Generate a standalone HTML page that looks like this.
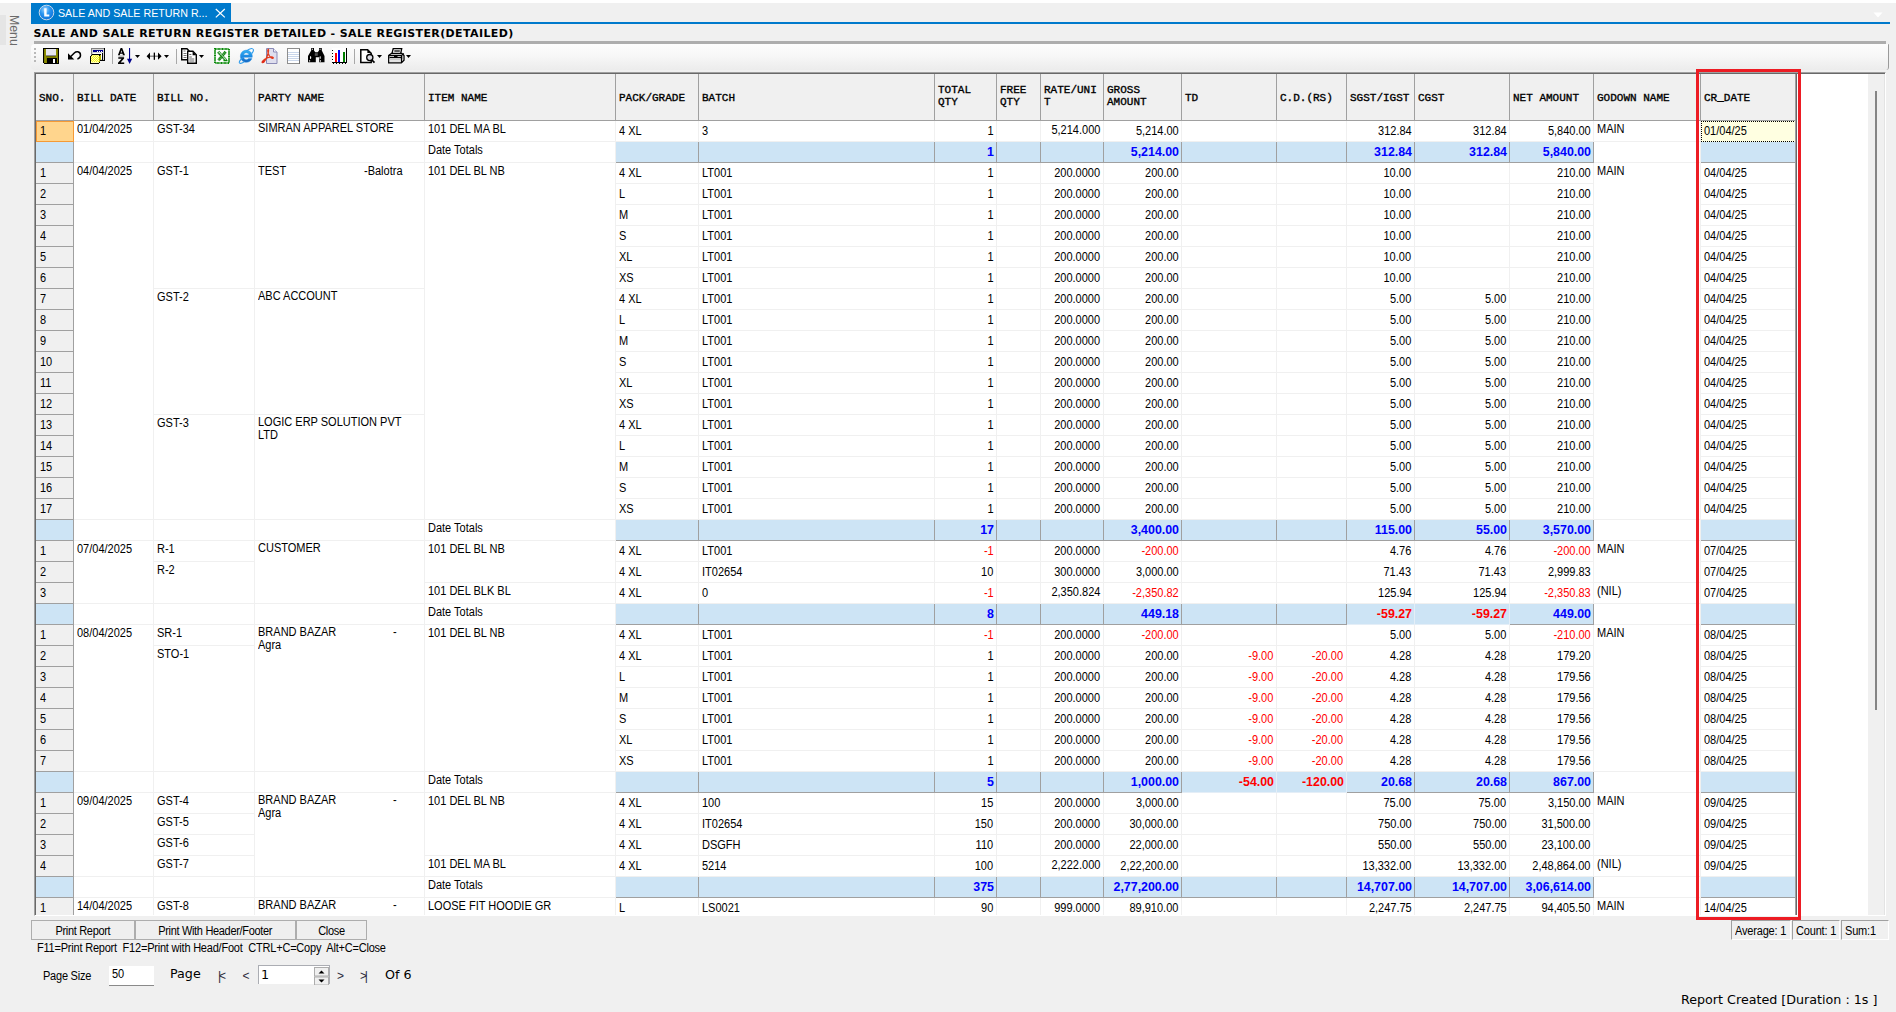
<!DOCTYPE html>
<html><head><meta charset="utf-8"><title>Sale Register</title>
<style>
html,body{margin:0;padding:0}
body{width:1896px;height:1012px;overflow:hidden;position:relative;background:#f0f0f0;font-family:"Liberation Sans",sans-serif;font-size:11px;color:#000}
.abs{position:absolute}
#topw{left:0;top:0;width:1896px;height:3px;background:#fff}
#mstrip{left:0;top:15px;width:6px;height:30px;background:#e5e5e5}
#menu{left:7px;top:15px;width:13px;height:32px;writing-mode:vertical-rl;font-size:12.3px;line-height:13px;color:#6a6a6a;white-space:nowrap}
#tab{left:31px;top:3px;width:200px;height:21px;background:#007acc;color:#fff}
#tabtxt{left:27px;top:0;line-height:20px;font-size:11.8px;white-space:nowrap;transform:scaleX(.905);transform-origin:0 50%}
#bline{left:31px;top:22px;width:1859px;height:2px;background:#007acc}
#title{left:33.5px;top:27px;line-height:14px;font-family:"DejaVu Sans",sans-serif;font-weight:bold;font-size:11px;letter-spacing:.39px;white-space:nowrap}
#gline{left:34px;top:41px;width:1852px;height:3px;background:#adadad}
#tbar{left:31px;top:44px;width:1858px;height:26px;border-radius:4px 1px 3px 4px;background:linear-gradient(#fdfdfd,#f6f6f6 50%,#ececec);box-sizing:border-box;border-right:1px solid #9a9a9a}
#tbar svg{position:absolute;top:4px}
.sep{position:absolute;top:5px;width:1px;height:15px;background:#a8a8a8}
.dd{position:absolute;top:11px;width:5px;height:3px;background:#000;clip-path:polygon(0 0,100% 0,50% 100%)}
#gridb{left:34px;top:72px;width:1852px;height:844px;box-sizing:border-box;border-top:1px solid #a0a0a0;border-left:1px solid #a0a0a0;border-right:1px solid #fff;border-bottom:1px solid #fff;background:#696969}
#grid{left:36px;top:74px;width:1849px;height:841px;background:#fff;overflow:hidden}
#sbar{left:1832px;top:0;width:16px;height:841px;background:#f0f0f0;border-right:1px solid #e3e3e3;box-sizing:content-box}
#thumb{left:1839px;top:17px;width:2px;height:619px;background:#858585}
.c{position:absolute;box-sizing:border-box;border-right:1px solid #f0f0f0;border-bottom:1px solid #f0f0f0;white-space:nowrap;overflow:hidden;padding-left:3px;line-height:21px}
.c i{font-style:normal;display:inline-block;transform:scaleX(.917);transform-origin:0 50%;font-size:12px}
.n i{transform-origin:100% 50%}
.t i{transform:none;font-size:12.4px}
.ms{display:inline-block;font-size:12px;transform:scaleX(.917);transform-origin:0 50%;white-space:pre}
.btn .ms{transform-origin:50% 50%}
.h{background:#f0f0f0;border-right:1px solid #a0a0a0;border-bottom:1px solid #a0a0a0;font-family:"Liberation Mono",monospace;font-weight:normal;-webkit-text-stroke:0.35px #000;font-size:11px;line-height:12px;padding-left:3px;display:flex;align-items:center}
.h span{display:block;position:relative;top:1px}
.h2 span{top:-1px}
.m{line-height:17px}
.p{line-height:13px;padding-top:1px}
.p br{line-height:12px}
.rh{background:#f0f0f0;border-right:1px solid #a0a0a0;border-bottom:1px solid #a0a0a0;padding-left:4px;line-height:20px}
.sel{background:#ffd58d;border:1px solid #f59a36;padding-left:3px;line-height:18px}
.tb{background:#cde4f5}
.n{text-align:right;padding-right:2.5px;padding-left:0}
.neg{color:#f00}
.up{line-height:19px}
.t{background:#cde4f5;border-right:1px solid #a0a0a0;border-bottom:1px solid #a0a0a0;font-weight:bold;font-size:12px;color:#00f;line-height:21px}
.t.n{padding-right:2px}
.tneg{color:#f00;border-right:1px solid #e4eef7;border-bottom:1px solid #e4eef7}
.cur{background:#ffffe1;border:1px dotted #000;line-height:19px;padding-left:2px}
.bal{display:inline-block;width:115.6px}
.bb{display:inline-block;width:147.2px}
#red{left:1696px;top:69px;width:105px;height:851px;box-sizing:border-box;border:3px solid #ed1c24}
.btn{position:absolute;top:920px;height:20px;box-sizing:border-box;border:1px solid #adadad;background:#efefef;text-align:center;line-height:20px;letter-spacing:-0.35px;white-space:nowrap}
#keys{left:37px;top:942px;line-height:13px;white-space:pre;letter-spacing:-0.23px}
#psz{left:43px;top:970px;line-height:13px;letter-spacing:-0.25px}
#pin{left:109px;top:966px;width:45px;height:20px;box-sizing:border-box;background:#fff;border-bottom:1px solid #8a8a8a;line-height:17px;padding-left:3px}
.vd{font-family:"DejaVu Sans",sans-serif;font-size:12.7px;white-space:nowrap;line-height:16px}
.nv{top:968px;font-size:12px;line-height:16px;color:#2a2a3a;white-space:nowrap}
#nud{left:258px;top:965px;width:72px;height:19px;box-sizing:border-box;border:1px solid #abadb3;border-bottom:none;background:#fff}
.st{position:absolute;top:920px;height:20px;box-sizing:border-box;border-left:1px solid #a0a0a0;border-top:1px solid #a0a0a0;border-right:1px solid #fff;border-bottom:1px solid #fff;line-height:20px;padding-left:3px;white-space:nowrap;letter-spacing:-0.2px}
</style></head>
<body>
<div id="topw" class="abs"></div>
<div id="mstrip" class="abs"></div>
<div id="menu" class="abs">Menu</div>
<div id="tab" class="abs">
<svg class="abs" style="left:7px;top:1px" width="17" height="17" viewBox="0 0 17 17"><defs><radialGradient id="lg" cx="40%" cy="30%" r="75%"><stop offset="0" stop-color="#9fd6ff"/><stop offset=".45" stop-color="#2a95f0"/><stop offset="1" stop-color="#0a6fd8"/></radialGradient></defs><circle cx="8.5" cy="8.5" r="7.3" fill="url(#lg)" stroke="#c9d9ea" stroke-width="1"/><path d="M6.200 4.300h2.400v6.300h2.700v1.900H6.200z" fill="#fff"/></svg>
<div id="tabtxt" class="abs">SALE AND SALE RETURN R...</div>
<svg class="abs" style="left:184px;top:5px" width="11" height="11" viewBox="0 0 11 11"><path d="M.8 1l9 8.400M9.800 1l-9 8.400" stroke="#fff" stroke-width="1.2" fill="none"/></svg>
</div>
<div id="bline" class="abs"></div>
<svg class="abs" style="left:1873px;top:12px" width="10" height="6" viewBox="0 0 10 6"><path d="M.5.5h9L5 5.5z" fill="#fff"/></svg>
<div id="title" class="abs">SALE AND SALE RETURN REGISTER DETAILED - SALE REGISTER(DETAILED)</div>
<div id="gline" class="abs"></div>
<div id="tbar" class="abs">
<svg style="left:3px;top:4px" width="2" height="14" viewBox="0 0 2 14" shape-rendering="crispEdges"><path d="M0 0h2v2H0zM0 4h2v2H0zM0 8h2v2H0zM0 12h2v2H0z" fill="#b9b9b9"/></svg>
<svg style="left:12px" width="16" height="16" viewBox="0 0 16 16" shape-rendering="crispEdges"><path d="M0 0h16v16H1L0 15z" fill="#000"/><rect x="1" y="1" width="14" height="14" fill="#7f7f00"/><rect x="2" y="1" width="1" height="14" fill="#a0a000" opacity=".5"/><rect x="13" y="1" width="1" height="14" fill="#a0a000" opacity=".5"/><rect x="3" y="1" width="10" height="7" fill="#8a8a90"/><rect x="3" y="1" width="10" height="6" fill="#e7e7ee"/><rect x="3" y="8" width="10" height="1" fill="#6b6b00"/><rect x="4" y="10" width="10" height="5" fill="#000"/><rect x="10" y="11" width="2" height="4" fill="#fff"/></svg>
<svg style="left:36px" width="16" height="16" viewBox="0 0 16 16"><path d="M1 5.200v6.300h6.300z" fill="#000"/><path d="M3.500 8.800L7.300 5Q8.800 3.500 10.800 3.800Q13.500 4.300 13.500 7.300Q13.500 10.200 10.400 10.900" fill="none" stroke="#000" stroke-width="1.500"/></svg>
<svg style="left:59px" width="16" height="16" viewBox="0 0 16 16" shape-rendering="crispEdges"><rect x="1" y="0" width="14" height="13" fill="#000"/><rect x="1" y="0" width="13" height="12" fill="#808080"/><rect x="2" y="1" width="12" height="11" fill="#d4d4d4"/><rect x="3" y="2" width="10" height="2" fill="#00008b"/><path d="M7 3h1v1H7zM9 3h1v1H9zM11 3h1v1h-1z" fill="#fff"/><rect x="3" y="5" width="10" height="6" fill="#fff"/><rect x="12" y="5" width="1" height="7" fill="#000"/><path d="M0 8L2 6h9v6l-2 4H0z" fill="#000"/><path d="M1 8L3 6.5h7L8.5 8z" fill="#ffff66"/><path d="M9 8l2-1.5v5L9 15z" fill="#b8b800"/><rect x="1" y="8" width="8" height="7" fill="#ffffb0"/><path d="M1 8h1v1H1zM3 8h1v1H3zM5 8h1v1H5zM7 8h1v1H7zM2 9h1v1H2zM4 9h1v1H4zM6 9h1v1H6zM8 9h1v1H8zM1 10h1v1H1zM3 10h1v1H3zM5 10h1v1H5zM7 10h1v1H7zM2 11h1v1H2zM4 11h1v1H4zM6 11h1v1H6zM8 11h1v1H8zM1 12h1v1H1zM3 12h1v1H3zM5 12h1v1H5zM7 12h1v1H7zM2 13h1v1H2zM4 13h1v1H4zM6 13h1v1H6zM8 13h1v1H8z" fill="#f4f420"/></svg>
<div class="sep" style="left:81px"></div>
<svg style="left:86px" width="16" height="16" viewBox="0 0 16 16"><path fill-rule="evenodd" d="M3.6 0h1.600L8 7.300H6l-.5-1.500H3.200L2.700 7.300H.9zM3.700 4.400h1.400L4.400 2.200z" fill="#000"/><rect x="1.500" y="7.600" width="5.500" height="1" fill="#a0a0a0"/><path d="M1.300 9.200h5.800v1.300L3.600 14.500h3.600V16H1v-1.300l3.600-4H1.300z" fill="#000"/><rect x="12" y="0" width="1.100" height="12" fill="#00008b"/><path d="M10 10.800h5.200L12.600 16z" fill="#00008b"/></svg>
<div class="dd" style="left:104px"></div>
<svg style="left:115px" width="17" height="16" viewBox="0 0 17 16"><rect x="3" y="7.6" width="10" height="1.2" fill="#777"/><path d="M0.6 8.2L4 4.6v7.2zM15.6 8.2L12 4.6v7.2z" fill="#000"/><rect x="7.7" y="4.6" width="1.3" height="7.2" fill="#000"/></svg>
<div class="dd" style="left:133px"></div>
<div class="sep" style="left:145px"></div>
<svg style="left:150px" width="16" height="16" viewBox="0 0 16 16"><path d="M.7.7h5.3l2 2v9H.7z" fill="#fff" stroke="#000" stroke-width="1.4"/><path d="M2.500 3h2M2.500 5.500h3M2.500 7.500h3M2.500 9.500h3" stroke="#777" stroke-width="1"/><path d="M6.7 3.2h5.2l3.4 3.6v8.5H6.7z" fill="#fff" stroke="#000" stroke-width="1.4"/><path d="M11.6 3.4v3.8h3.6z" fill="#000"/><path d="M8.300 6.500h2M8.300 9h2.500M8.300 11h5M8.300 13h5" stroke="#666" stroke-width="1"/></svg>
<div class="dd" style="left:168px"></div>
<svg style="left:183px" width="16" height="16" viewBox="0 0 16 16"><rect x="1" y="1" width="14" height="14" fill="#fff" stroke="#0a8a0a" stroke-width="2" stroke-dasharray="1 .4"/><path d="M4.200 3.800l7.800 8.600M11.600 3.800l-7.200 8.600" stroke="#0c800c" stroke-width="2.900" stroke-dasharray="1 .2"/><path d="M4.600 3.600l7.800 8.800" stroke="#e4f4e4" stroke-width=".8"/><path d="M9.500 12.600h4" stroke="#0a8a0a" stroke-width="1.300"/></svg>
<svg style="left:207px" width="17" height="16" viewBox="0 0 17 16"><defs><linearGradient id="ie" x1="0" y1="0" x2="0" y2="1"><stop offset="0" stop-color="#35b4f4"/><stop offset=".55" stop-color="#1b86e0"/><stop offset="1" stop-color="#1566c0"/></linearGradient></defs><path d="M8.3 2.2C4.9 2.2 2.4 4.9 2.4 8.3s2.6 6 6 6c2.600 0 4.700-1.500 5.500-3.700h-3.300c-.5.700-1.200 1.100-2.200 1.100-1.500 0-2.600-1-2.800-2.400h8.600c.1-.4.100-.7.100-1.100 0-3.400-2.600-6-6-6zM5.700 6.900c.3-1.300 1.300-2.100 2.600-2.100s2.400.8 2.600 2.100z" fill="url(#ie)" stroke="#1e8ae4" stroke-width=".45"/><path d="M14.800.9c-1.400-.9-4 .2-6.700 2.300M15 1c.9 1-.1 3.200-1.300 4.600M4.700 9.500C2.300 11.900.6 14 1.500 15c.8.900 3-.1 4.800-1.300" fill="none" stroke="#2e9cec" stroke-width="1.1"/></svg>
<svg style="left:230px" width="17" height="16" viewBox="0 0 17 16"><path d="M5.500.5h7l3.500 3.500v11.500H5.500z" fill="#dfdfee" stroke="#8a8ab6" stroke-width="1"/><path d="M12.500.5v3.500h3.500" fill="#f4f4fb" stroke="#8a8ab6" stroke-width="1"/><path d="M7.400 1.300c-.9.300-.7 2.300-.1 4.300.500 1.700 1.500 3.200 2.800 4.200 1.300.9 2.500.5 2.100-.3-.5-.8-3.200-.7-5.500.2-2.400 1-4.600 2.700-5.500 4.100-.5 1 .6 1.300 1.700.3 1.500-1.500 3-4.700 3.800-7.300.6-2.200 1.400-5.100.7-5.500z" fill="none" stroke="#e23a1c" stroke-width="1.300"/><circle cx="2.200" cy="13.600" r="1.200" fill="#e0281a"/></svg>
<svg style="left:256px" width="14" height="16" viewBox="0 0 14 16" shape-rendering="crispEdges"><rect x="0" y="0" width="13" height="16" fill="#8e8e8e"/><rect x="1" y="1" width="11" height="14" fill="#fff"/><rect x="12" y="1" width="1" height="15" fill="#6e6e6e"/><path d="M1 4h11v1H1zM1 6h11v1H1zM1 8h11v1H1zM1 10h11v1H1zM1 12h11v1H1z" fill="#c9d6ea"/></svg>
<svg style="left:277px" width="17" height="15" viewBox="0 0 17 15"><path d="M3.200 0h2.800v2.500l1.300 1.700h2.400l1.300-1.700V0h2.800v2.500l2.700 5.500v6.300h-5.300V9.200H7.800v5.100H0V8l3.200-5.500z" fill="#000"/><path d="M4 .8h1v.9H4zM11.600.8h1v.9h-1z" fill="#fff"/><ellipse cx="2.600" cy="9.500" rx=".6" ry="1.600" fill="#fff"/><ellipse cx="12.200" cy="9.400" rx=".6" ry="1.500" fill="#ddd"/><ellipse cx="1.700" cy="12.800" rx=".5" ry=".9" fill="#fff"/><ellipse cx="12.400" cy="12.900" rx=".5" ry=".9" fill="#fff"/><rect x="6.800" y="5.200" width="3" height="2.600" fill="#555"/></svg>
<svg style="left:301px" width="16" height="16" viewBox="0 0 16 16" shape-rendering="crispEdges"><rect x="0" y="0" width="15" height="15" fill="#fff"/><rect x="14" y="0" width="1" height="15" fill="#000"/><rect x="0" y="14" width="15" height="1" fill="#000"/><path d="M0 2h1v1H0zM0 5h1v1H0zM0 8h1v1H0zM0 11h1v1H0zM1 15h1v1H1zM4 15h1v1H4zM7 15h1v1H7zM10 15h1v1h-1zM13 15h1v1h-1z" fill="#000"/><rect x="3" y="5" width="2" height="9" fill="#f00"/><rect x="6" y="2" width="2" height="12" fill="#00f"/><rect x="11" y="4" width="2" height="10" fill="#008000"/></svg>
<div class="sep" style="left:323px"></div>
<svg style="left:329px;top:5px" width="16" height="15" viewBox="0 0 16 15"><path d="M.8.800h6.800l3.600 3.600v9H.8z" fill="#fff" stroke="#000" stroke-width="1.500"/><path d="M7.400.8v3.200h3.400" fill="#000"/><circle cx="9.800" cy="8.600" r="3.100" fill="#dcdce4" stroke="#000" stroke-width="1.300"/><path d="M11.900 11l2.600 2.700" stroke="#000" stroke-width="1.700"/></svg>
<div class="dd" style="left:346px"></div>
<svg style="left:357px" width="17" height="16" viewBox="0 0 17 16"><path d="M4 5.500L5.200.7h8.500l-1 4.800" fill="#fff" stroke="#000" stroke-width="1.300"/><path d="M6.300 3h5.500" stroke="#000" stroke-width="1.300"/><path d="M.7 7.500L3.500 5.300h10.300L16 7.500v4.800l-2.700 2.500H.7z" fill="#fff" stroke="#000" stroke-width="1.300"/><path d="M.7 7.500h12.800v7.300M13.500 7.500l2.300-2" fill="none" stroke="#000" stroke-width="1.300"/><path d="M1.500 9.600h11.500" stroke="#000" stroke-width="1.200"/><path d="M1.500 11.500h11.500M1.500 13h11.500" stroke="#c8c8c8" stroke-width="1"/><path d="M6 8.400h3.500" stroke="#000" stroke-width="1.400"/><path d="M14.700 8v3.500" stroke="#999" stroke-width="1"/></svg>
<div class="dd" style="left:375px"></div>

</div>
<div id="gridb" class="abs"></div>
<div id="grid" class="abs">
<div class="c h" style="left:0px;top:0px;width:38px;height:47px"><span>SNO.</span></div>
<div class="c h" style="left:38px;top:0px;width:80px;height:47px"><span>BILL DATE</span></div>
<div class="c h" style="left:118px;top:0px;width:101px;height:47px"><span>BILL NO.</span></div>
<div class="c h" style="left:219px;top:0px;width:170px;height:47px"><span>PARTY NAME</span></div>
<div class="c h" style="left:389px;top:0px;width:191px;height:47px"><span>ITEM NAME</span></div>
<div class="c h" style="left:580px;top:0px;width:83px;height:47px"><span>PACK/GRADE</span></div>
<div class="c h" style="left:663px;top:0px;width:236px;height:47px"><span>BATCH</span></div>
<div class="c h h2" style="left:899px;top:0px;width:62px;height:47px"><span>TOTAL<br>QTY</span></div>
<div class="c h h2" style="left:961px;top:0px;width:44px;height:47px"><span>FREE<br>QTY</span></div>
<div class="c h h2" style="left:1005px;top:0px;width:63px;height:47px"><span>RATE/UNI<br>T</span></div>
<div class="c h h2" style="left:1068px;top:0px;width:78px;height:47px"><span>GROSS<br>AMOUNT</span></div>
<div class="c h" style="left:1146px;top:0px;width:95px;height:47px"><span>TD</span></div>
<div class="c h" style="left:1241px;top:0px;width:70px;height:47px"><span>C.D.(RS)</span></div>
<div class="c h" style="left:1311px;top:0px;width:68px;height:47px"><span>SGST/IGST</span></div>
<div class="c h" style="left:1379px;top:0px;width:95px;height:47px"><span>CGST</span></div>
<div class="c h" style="left:1474px;top:0px;width:84px;height:47px"><span>NET AMOUNT</span></div>
<div class="c h" style="left:1558px;top:0px;width:107px;height:47px"><span>GODOWN NAME</span></div>
<div class="c h" style="left:1665px;top:0px;width:95px;height:47px"><span>CR_DATE</span></div>
<div class="c m" style="left:38px;top:47px;width:80px;height:21px"><i>01/04/2025</i></div>
<div class="c m" style="left:118px;top:47px;width:101px;height:21px"><i>GST-34</i></div>
<div class="c m p" style="left:219px;top:47px;width:170px;height:21px"><i>SIMRAN APPAREL STORE</i></div>
<div class="c m" style="left:389px;top:47px;width:191px;height:21px"><i>101 DEL MA BL</i></div>
<div class="c m" style="left:1558px;top:47px;width:107px;height:21px"><i>MAIN</i></div>
<div class="c rh sel" style="left:0px;top:47px;width:38px;height:21px"><i>1</i></div>
<div class="c d" style="left:580px;top:47px;width:83px;height:21px"><i>4 XL</i></div>
<div class="c d" style="left:663px;top:47px;width:236px;height:21px"><i>3</i></div>
<div class="c d n" style="left:899px;top:47px;width:62px;height:21px"><i>1</i></div>
<div class="c d n" style="left:961px;top:47px;width:44px;height:21px"></div>
<div class="c d n up" style="left:1005px;top:47px;width:63px;height:21px"><i>5,214.000</i></div>
<div class="c d n" style="left:1068px;top:47px;width:78px;height:21px"><i>5,214.00</i></div>
<div class="c d n" style="left:1146px;top:47px;width:95px;height:21px"></div>
<div class="c d n" style="left:1241px;top:47px;width:70px;height:21px"></div>
<div class="c d n" style="left:1311px;top:47px;width:68px;height:21px"><i>312.84</i></div>
<div class="c d n" style="left:1379px;top:47px;width:95px;height:21px"><i>312.84</i></div>
<div class="c d n" style="left:1474px;top:47px;width:84px;height:21px"><i>5,840.00</i></div>
<div class="c d cur" style="left:1665px;top:47px;width:95px;height:21px"><i>01/04/25</i></div>
<div class="c rh tb" style="left:0px;top:68px;width:38px;height:21px"></div>
<div class="c m" style="left:38px;top:68px;width:80px;height:21px"></div>
<div class="c m" style="left:118px;top:68px;width:101px;height:21px"></div>
<div class="c m" style="left:219px;top:68px;width:170px;height:21px"></div>
<div class="c m" style="left:389px;top:68px;width:191px;height:21px"><i>Date Totals</i></div>
<div class="c t" style="left:580px;top:68px;width:83px;height:21px"></div>
<div class="c t" style="left:663px;top:68px;width:236px;height:21px"></div>
<div class="c t n" style="left:899px;top:68px;width:62px;height:21px"><i>1</i></div>
<div class="c t n" style="left:961px;top:68px;width:44px;height:21px"></div>
<div class="c t n" style="left:1005px;top:68px;width:63px;height:21px"></div>
<div class="c t n" style="left:1068px;top:68px;width:78px;height:21px"><i>5,214.00</i></div>
<div class="c t n" style="left:1146px;top:68px;width:95px;height:21px"></div>
<div class="c t n" style="left:1241px;top:68px;width:70px;height:21px"></div>
<div class="c t n" style="left:1311px;top:68px;width:68px;height:21px"><i>312.84</i></div>
<div class="c t n" style="left:1379px;top:68px;width:95px;height:21px"><i>312.84</i></div>
<div class="c t n" style="left:1474px;top:68px;width:84px;height:21px"><i>5,840.00</i></div>
<div class="c m" style="left:1558px;top:68px;width:107px;height:21px"></div>
<div class="c t" style="left:1665px;top:68px;width:95px;height:21px"></div>
<div class="c m" style="left:38px;top:89px;width:80px;height:357px"><i>04/04/2025</i></div>
<div class="c m" style="left:118px;top:89px;width:101px;height:126px"><i>GST-1</i></div>
<div class="c m" style="left:118px;top:215px;width:101px;height:126px"><i>GST-2</i></div>
<div class="c m" style="left:118px;top:341px;width:101px;height:105px"><i>GST-3</i></div>
<div class="c m p" style="left:219px;top:89px;width:170px;height:126px"><i><span class="bal" style="position:relative;top:1px">TEST</span><span style="position:relative;top:1px">-Balotra</span></i></div>
<div class="c m p" style="left:219px;top:215px;width:170px;height:126px"><i>ABC ACCOUNT</i></div>
<div class="c m p" style="left:219px;top:341px;width:170px;height:105px"><i>LOGIC ERP SOLUTION PVT<br>LTD</i></div>
<div class="c m" style="left:389px;top:89px;width:191px;height:357px"><i>101 DEL BL NB</i></div>
<div class="c m" style="left:1558px;top:89px;width:107px;height:357px"><i>MAIN</i></div>
<div class="c rh" style="left:0px;top:89px;width:38px;height:21px"><i>1</i></div>
<div class="c d" style="left:580px;top:89px;width:83px;height:21px"><i>4 XL</i></div>
<div class="c d" style="left:663px;top:89px;width:236px;height:21px"><i>LT001</i></div>
<div class="c d n" style="left:899px;top:89px;width:62px;height:21px"><i>1</i></div>
<div class="c d n" style="left:961px;top:89px;width:44px;height:21px"></div>
<div class="c d n" style="left:1005px;top:89px;width:63px;height:21px"><i>200.0000</i></div>
<div class="c d n" style="left:1068px;top:89px;width:78px;height:21px"><i>200.00</i></div>
<div class="c d n" style="left:1146px;top:89px;width:95px;height:21px"></div>
<div class="c d n" style="left:1241px;top:89px;width:70px;height:21px"></div>
<div class="c d n" style="left:1311px;top:89px;width:68px;height:21px"><i>10.00</i></div>
<div class="c d n" style="left:1379px;top:89px;width:95px;height:21px"></div>
<div class="c d n" style="left:1474px;top:89px;width:84px;height:21px"><i>210.00</i></div>
<div class="c d" style="left:1665px;top:89px;width:95px;height:21px"><i>04/04/25</i></div>
<div class="c rh" style="left:0px;top:110px;width:38px;height:21px"><i>2</i></div>
<div class="c d" style="left:580px;top:110px;width:83px;height:21px"><i>L</i></div>
<div class="c d" style="left:663px;top:110px;width:236px;height:21px"><i>LT001</i></div>
<div class="c d n" style="left:899px;top:110px;width:62px;height:21px"><i>1</i></div>
<div class="c d n" style="left:961px;top:110px;width:44px;height:21px"></div>
<div class="c d n" style="left:1005px;top:110px;width:63px;height:21px"><i>200.0000</i></div>
<div class="c d n" style="left:1068px;top:110px;width:78px;height:21px"><i>200.00</i></div>
<div class="c d n" style="left:1146px;top:110px;width:95px;height:21px"></div>
<div class="c d n" style="left:1241px;top:110px;width:70px;height:21px"></div>
<div class="c d n" style="left:1311px;top:110px;width:68px;height:21px"><i>10.00</i></div>
<div class="c d n" style="left:1379px;top:110px;width:95px;height:21px"></div>
<div class="c d n" style="left:1474px;top:110px;width:84px;height:21px"><i>210.00</i></div>
<div class="c d" style="left:1665px;top:110px;width:95px;height:21px"><i>04/04/25</i></div>
<div class="c rh" style="left:0px;top:131px;width:38px;height:21px"><i>3</i></div>
<div class="c d" style="left:580px;top:131px;width:83px;height:21px"><i>M</i></div>
<div class="c d" style="left:663px;top:131px;width:236px;height:21px"><i>LT001</i></div>
<div class="c d n" style="left:899px;top:131px;width:62px;height:21px"><i>1</i></div>
<div class="c d n" style="left:961px;top:131px;width:44px;height:21px"></div>
<div class="c d n" style="left:1005px;top:131px;width:63px;height:21px"><i>200.0000</i></div>
<div class="c d n" style="left:1068px;top:131px;width:78px;height:21px"><i>200.00</i></div>
<div class="c d n" style="left:1146px;top:131px;width:95px;height:21px"></div>
<div class="c d n" style="left:1241px;top:131px;width:70px;height:21px"></div>
<div class="c d n" style="left:1311px;top:131px;width:68px;height:21px"><i>10.00</i></div>
<div class="c d n" style="left:1379px;top:131px;width:95px;height:21px"></div>
<div class="c d n" style="left:1474px;top:131px;width:84px;height:21px"><i>210.00</i></div>
<div class="c d" style="left:1665px;top:131px;width:95px;height:21px"><i>04/04/25</i></div>
<div class="c rh" style="left:0px;top:152px;width:38px;height:21px"><i>4</i></div>
<div class="c d" style="left:580px;top:152px;width:83px;height:21px"><i>S</i></div>
<div class="c d" style="left:663px;top:152px;width:236px;height:21px"><i>LT001</i></div>
<div class="c d n" style="left:899px;top:152px;width:62px;height:21px"><i>1</i></div>
<div class="c d n" style="left:961px;top:152px;width:44px;height:21px"></div>
<div class="c d n" style="left:1005px;top:152px;width:63px;height:21px"><i>200.0000</i></div>
<div class="c d n" style="left:1068px;top:152px;width:78px;height:21px"><i>200.00</i></div>
<div class="c d n" style="left:1146px;top:152px;width:95px;height:21px"></div>
<div class="c d n" style="left:1241px;top:152px;width:70px;height:21px"></div>
<div class="c d n" style="left:1311px;top:152px;width:68px;height:21px"><i>10.00</i></div>
<div class="c d n" style="left:1379px;top:152px;width:95px;height:21px"></div>
<div class="c d n" style="left:1474px;top:152px;width:84px;height:21px"><i>210.00</i></div>
<div class="c d" style="left:1665px;top:152px;width:95px;height:21px"><i>04/04/25</i></div>
<div class="c rh" style="left:0px;top:173px;width:38px;height:21px"><i>5</i></div>
<div class="c d" style="left:580px;top:173px;width:83px;height:21px"><i>XL</i></div>
<div class="c d" style="left:663px;top:173px;width:236px;height:21px"><i>LT001</i></div>
<div class="c d n" style="left:899px;top:173px;width:62px;height:21px"><i>1</i></div>
<div class="c d n" style="left:961px;top:173px;width:44px;height:21px"></div>
<div class="c d n" style="left:1005px;top:173px;width:63px;height:21px"><i>200.0000</i></div>
<div class="c d n" style="left:1068px;top:173px;width:78px;height:21px"><i>200.00</i></div>
<div class="c d n" style="left:1146px;top:173px;width:95px;height:21px"></div>
<div class="c d n" style="left:1241px;top:173px;width:70px;height:21px"></div>
<div class="c d n" style="left:1311px;top:173px;width:68px;height:21px"><i>10.00</i></div>
<div class="c d n" style="left:1379px;top:173px;width:95px;height:21px"></div>
<div class="c d n" style="left:1474px;top:173px;width:84px;height:21px"><i>210.00</i></div>
<div class="c d" style="left:1665px;top:173px;width:95px;height:21px"><i>04/04/25</i></div>
<div class="c rh" style="left:0px;top:194px;width:38px;height:21px"><i>6</i></div>
<div class="c d" style="left:580px;top:194px;width:83px;height:21px"><i>XS</i></div>
<div class="c d" style="left:663px;top:194px;width:236px;height:21px"><i>LT001</i></div>
<div class="c d n" style="left:899px;top:194px;width:62px;height:21px"><i>1</i></div>
<div class="c d n" style="left:961px;top:194px;width:44px;height:21px"></div>
<div class="c d n" style="left:1005px;top:194px;width:63px;height:21px"><i>200.0000</i></div>
<div class="c d n" style="left:1068px;top:194px;width:78px;height:21px"><i>200.00</i></div>
<div class="c d n" style="left:1146px;top:194px;width:95px;height:21px"></div>
<div class="c d n" style="left:1241px;top:194px;width:70px;height:21px"></div>
<div class="c d n" style="left:1311px;top:194px;width:68px;height:21px"><i>10.00</i></div>
<div class="c d n" style="left:1379px;top:194px;width:95px;height:21px"></div>
<div class="c d n" style="left:1474px;top:194px;width:84px;height:21px"><i>210.00</i></div>
<div class="c d" style="left:1665px;top:194px;width:95px;height:21px"><i>04/04/25</i></div>
<div class="c rh" style="left:0px;top:215px;width:38px;height:21px"><i>7</i></div>
<div class="c d" style="left:580px;top:215px;width:83px;height:21px"><i>4 XL</i></div>
<div class="c d" style="left:663px;top:215px;width:236px;height:21px"><i>LT001</i></div>
<div class="c d n" style="left:899px;top:215px;width:62px;height:21px"><i>1</i></div>
<div class="c d n" style="left:961px;top:215px;width:44px;height:21px"></div>
<div class="c d n" style="left:1005px;top:215px;width:63px;height:21px"><i>200.0000</i></div>
<div class="c d n" style="left:1068px;top:215px;width:78px;height:21px"><i>200.00</i></div>
<div class="c d n" style="left:1146px;top:215px;width:95px;height:21px"></div>
<div class="c d n" style="left:1241px;top:215px;width:70px;height:21px"></div>
<div class="c d n" style="left:1311px;top:215px;width:68px;height:21px"><i>5.00</i></div>
<div class="c d n" style="left:1379px;top:215px;width:95px;height:21px"><i>5.00</i></div>
<div class="c d n" style="left:1474px;top:215px;width:84px;height:21px"><i>210.00</i></div>
<div class="c d" style="left:1665px;top:215px;width:95px;height:21px"><i>04/04/25</i></div>
<div class="c rh" style="left:0px;top:236px;width:38px;height:21px"><i>8</i></div>
<div class="c d" style="left:580px;top:236px;width:83px;height:21px"><i>L</i></div>
<div class="c d" style="left:663px;top:236px;width:236px;height:21px"><i>LT001</i></div>
<div class="c d n" style="left:899px;top:236px;width:62px;height:21px"><i>1</i></div>
<div class="c d n" style="left:961px;top:236px;width:44px;height:21px"></div>
<div class="c d n" style="left:1005px;top:236px;width:63px;height:21px"><i>200.0000</i></div>
<div class="c d n" style="left:1068px;top:236px;width:78px;height:21px"><i>200.00</i></div>
<div class="c d n" style="left:1146px;top:236px;width:95px;height:21px"></div>
<div class="c d n" style="left:1241px;top:236px;width:70px;height:21px"></div>
<div class="c d n" style="left:1311px;top:236px;width:68px;height:21px"><i>5.00</i></div>
<div class="c d n" style="left:1379px;top:236px;width:95px;height:21px"><i>5.00</i></div>
<div class="c d n" style="left:1474px;top:236px;width:84px;height:21px"><i>210.00</i></div>
<div class="c d" style="left:1665px;top:236px;width:95px;height:21px"><i>04/04/25</i></div>
<div class="c rh" style="left:0px;top:257px;width:38px;height:21px"><i>9</i></div>
<div class="c d" style="left:580px;top:257px;width:83px;height:21px"><i>M</i></div>
<div class="c d" style="left:663px;top:257px;width:236px;height:21px"><i>LT001</i></div>
<div class="c d n" style="left:899px;top:257px;width:62px;height:21px"><i>1</i></div>
<div class="c d n" style="left:961px;top:257px;width:44px;height:21px"></div>
<div class="c d n" style="left:1005px;top:257px;width:63px;height:21px"><i>200.0000</i></div>
<div class="c d n" style="left:1068px;top:257px;width:78px;height:21px"><i>200.00</i></div>
<div class="c d n" style="left:1146px;top:257px;width:95px;height:21px"></div>
<div class="c d n" style="left:1241px;top:257px;width:70px;height:21px"></div>
<div class="c d n" style="left:1311px;top:257px;width:68px;height:21px"><i>5.00</i></div>
<div class="c d n" style="left:1379px;top:257px;width:95px;height:21px"><i>5.00</i></div>
<div class="c d n" style="left:1474px;top:257px;width:84px;height:21px"><i>210.00</i></div>
<div class="c d" style="left:1665px;top:257px;width:95px;height:21px"><i>04/04/25</i></div>
<div class="c rh" style="left:0px;top:278px;width:38px;height:21px"><i>10</i></div>
<div class="c d" style="left:580px;top:278px;width:83px;height:21px"><i>S</i></div>
<div class="c d" style="left:663px;top:278px;width:236px;height:21px"><i>LT001</i></div>
<div class="c d n" style="left:899px;top:278px;width:62px;height:21px"><i>1</i></div>
<div class="c d n" style="left:961px;top:278px;width:44px;height:21px"></div>
<div class="c d n" style="left:1005px;top:278px;width:63px;height:21px"><i>200.0000</i></div>
<div class="c d n" style="left:1068px;top:278px;width:78px;height:21px"><i>200.00</i></div>
<div class="c d n" style="left:1146px;top:278px;width:95px;height:21px"></div>
<div class="c d n" style="left:1241px;top:278px;width:70px;height:21px"></div>
<div class="c d n" style="left:1311px;top:278px;width:68px;height:21px"><i>5.00</i></div>
<div class="c d n" style="left:1379px;top:278px;width:95px;height:21px"><i>5.00</i></div>
<div class="c d n" style="left:1474px;top:278px;width:84px;height:21px"><i>210.00</i></div>
<div class="c d" style="left:1665px;top:278px;width:95px;height:21px"><i>04/04/25</i></div>
<div class="c rh" style="left:0px;top:299px;width:38px;height:21px"><i>11</i></div>
<div class="c d" style="left:580px;top:299px;width:83px;height:21px"><i>XL</i></div>
<div class="c d" style="left:663px;top:299px;width:236px;height:21px"><i>LT001</i></div>
<div class="c d n" style="left:899px;top:299px;width:62px;height:21px"><i>1</i></div>
<div class="c d n" style="left:961px;top:299px;width:44px;height:21px"></div>
<div class="c d n" style="left:1005px;top:299px;width:63px;height:21px"><i>200.0000</i></div>
<div class="c d n" style="left:1068px;top:299px;width:78px;height:21px"><i>200.00</i></div>
<div class="c d n" style="left:1146px;top:299px;width:95px;height:21px"></div>
<div class="c d n" style="left:1241px;top:299px;width:70px;height:21px"></div>
<div class="c d n" style="left:1311px;top:299px;width:68px;height:21px"><i>5.00</i></div>
<div class="c d n" style="left:1379px;top:299px;width:95px;height:21px"><i>5.00</i></div>
<div class="c d n" style="left:1474px;top:299px;width:84px;height:21px"><i>210.00</i></div>
<div class="c d" style="left:1665px;top:299px;width:95px;height:21px"><i>04/04/25</i></div>
<div class="c rh" style="left:0px;top:320px;width:38px;height:21px"><i>12</i></div>
<div class="c d" style="left:580px;top:320px;width:83px;height:21px"><i>XS</i></div>
<div class="c d" style="left:663px;top:320px;width:236px;height:21px"><i>LT001</i></div>
<div class="c d n" style="left:899px;top:320px;width:62px;height:21px"><i>1</i></div>
<div class="c d n" style="left:961px;top:320px;width:44px;height:21px"></div>
<div class="c d n" style="left:1005px;top:320px;width:63px;height:21px"><i>200.0000</i></div>
<div class="c d n" style="left:1068px;top:320px;width:78px;height:21px"><i>200.00</i></div>
<div class="c d n" style="left:1146px;top:320px;width:95px;height:21px"></div>
<div class="c d n" style="left:1241px;top:320px;width:70px;height:21px"></div>
<div class="c d n" style="left:1311px;top:320px;width:68px;height:21px"><i>5.00</i></div>
<div class="c d n" style="left:1379px;top:320px;width:95px;height:21px"><i>5.00</i></div>
<div class="c d n" style="left:1474px;top:320px;width:84px;height:21px"><i>210.00</i></div>
<div class="c d" style="left:1665px;top:320px;width:95px;height:21px"><i>04/04/25</i></div>
<div class="c rh" style="left:0px;top:341px;width:38px;height:21px"><i>13</i></div>
<div class="c d" style="left:580px;top:341px;width:83px;height:21px"><i>4 XL</i></div>
<div class="c d" style="left:663px;top:341px;width:236px;height:21px"><i>LT001</i></div>
<div class="c d n" style="left:899px;top:341px;width:62px;height:21px"><i>1</i></div>
<div class="c d n" style="left:961px;top:341px;width:44px;height:21px"></div>
<div class="c d n" style="left:1005px;top:341px;width:63px;height:21px"><i>200.0000</i></div>
<div class="c d n" style="left:1068px;top:341px;width:78px;height:21px"><i>200.00</i></div>
<div class="c d n" style="left:1146px;top:341px;width:95px;height:21px"></div>
<div class="c d n" style="left:1241px;top:341px;width:70px;height:21px"></div>
<div class="c d n" style="left:1311px;top:341px;width:68px;height:21px"><i>5.00</i></div>
<div class="c d n" style="left:1379px;top:341px;width:95px;height:21px"><i>5.00</i></div>
<div class="c d n" style="left:1474px;top:341px;width:84px;height:21px"><i>210.00</i></div>
<div class="c d" style="left:1665px;top:341px;width:95px;height:21px"><i>04/04/25</i></div>
<div class="c rh" style="left:0px;top:362px;width:38px;height:21px"><i>14</i></div>
<div class="c d" style="left:580px;top:362px;width:83px;height:21px"><i>L</i></div>
<div class="c d" style="left:663px;top:362px;width:236px;height:21px"><i>LT001</i></div>
<div class="c d n" style="left:899px;top:362px;width:62px;height:21px"><i>1</i></div>
<div class="c d n" style="left:961px;top:362px;width:44px;height:21px"></div>
<div class="c d n" style="left:1005px;top:362px;width:63px;height:21px"><i>200.0000</i></div>
<div class="c d n" style="left:1068px;top:362px;width:78px;height:21px"><i>200.00</i></div>
<div class="c d n" style="left:1146px;top:362px;width:95px;height:21px"></div>
<div class="c d n" style="left:1241px;top:362px;width:70px;height:21px"></div>
<div class="c d n" style="left:1311px;top:362px;width:68px;height:21px"><i>5.00</i></div>
<div class="c d n" style="left:1379px;top:362px;width:95px;height:21px"><i>5.00</i></div>
<div class="c d n" style="left:1474px;top:362px;width:84px;height:21px"><i>210.00</i></div>
<div class="c d" style="left:1665px;top:362px;width:95px;height:21px"><i>04/04/25</i></div>
<div class="c rh" style="left:0px;top:383px;width:38px;height:21px"><i>15</i></div>
<div class="c d" style="left:580px;top:383px;width:83px;height:21px"><i>M</i></div>
<div class="c d" style="left:663px;top:383px;width:236px;height:21px"><i>LT001</i></div>
<div class="c d n" style="left:899px;top:383px;width:62px;height:21px"><i>1</i></div>
<div class="c d n" style="left:961px;top:383px;width:44px;height:21px"></div>
<div class="c d n" style="left:1005px;top:383px;width:63px;height:21px"><i>200.0000</i></div>
<div class="c d n" style="left:1068px;top:383px;width:78px;height:21px"><i>200.00</i></div>
<div class="c d n" style="left:1146px;top:383px;width:95px;height:21px"></div>
<div class="c d n" style="left:1241px;top:383px;width:70px;height:21px"></div>
<div class="c d n" style="left:1311px;top:383px;width:68px;height:21px"><i>5.00</i></div>
<div class="c d n" style="left:1379px;top:383px;width:95px;height:21px"><i>5.00</i></div>
<div class="c d n" style="left:1474px;top:383px;width:84px;height:21px"><i>210.00</i></div>
<div class="c d" style="left:1665px;top:383px;width:95px;height:21px"><i>04/04/25</i></div>
<div class="c rh" style="left:0px;top:404px;width:38px;height:21px"><i>16</i></div>
<div class="c d" style="left:580px;top:404px;width:83px;height:21px"><i>S</i></div>
<div class="c d" style="left:663px;top:404px;width:236px;height:21px"><i>LT001</i></div>
<div class="c d n" style="left:899px;top:404px;width:62px;height:21px"><i>1</i></div>
<div class="c d n" style="left:961px;top:404px;width:44px;height:21px"></div>
<div class="c d n" style="left:1005px;top:404px;width:63px;height:21px"><i>200.0000</i></div>
<div class="c d n" style="left:1068px;top:404px;width:78px;height:21px"><i>200.00</i></div>
<div class="c d n" style="left:1146px;top:404px;width:95px;height:21px"></div>
<div class="c d n" style="left:1241px;top:404px;width:70px;height:21px"></div>
<div class="c d n" style="left:1311px;top:404px;width:68px;height:21px"><i>5.00</i></div>
<div class="c d n" style="left:1379px;top:404px;width:95px;height:21px"><i>5.00</i></div>
<div class="c d n" style="left:1474px;top:404px;width:84px;height:21px"><i>210.00</i></div>
<div class="c d" style="left:1665px;top:404px;width:95px;height:21px"><i>04/04/25</i></div>
<div class="c rh" style="left:0px;top:425px;width:38px;height:21px"><i>17</i></div>
<div class="c d" style="left:580px;top:425px;width:83px;height:21px"><i>XS</i></div>
<div class="c d" style="left:663px;top:425px;width:236px;height:21px"><i>LT001</i></div>
<div class="c d n" style="left:899px;top:425px;width:62px;height:21px"><i>1</i></div>
<div class="c d n" style="left:961px;top:425px;width:44px;height:21px"></div>
<div class="c d n" style="left:1005px;top:425px;width:63px;height:21px"><i>200.0000</i></div>
<div class="c d n" style="left:1068px;top:425px;width:78px;height:21px"><i>200.00</i></div>
<div class="c d n" style="left:1146px;top:425px;width:95px;height:21px"></div>
<div class="c d n" style="left:1241px;top:425px;width:70px;height:21px"></div>
<div class="c d n" style="left:1311px;top:425px;width:68px;height:21px"><i>5.00</i></div>
<div class="c d n" style="left:1379px;top:425px;width:95px;height:21px"><i>5.00</i></div>
<div class="c d n" style="left:1474px;top:425px;width:84px;height:21px"><i>210.00</i></div>
<div class="c d" style="left:1665px;top:425px;width:95px;height:21px"><i>04/04/25</i></div>
<div class="c rh tb" style="left:0px;top:446px;width:38px;height:21px"></div>
<div class="c m" style="left:38px;top:446px;width:80px;height:21px"></div>
<div class="c m" style="left:118px;top:446px;width:101px;height:21px"></div>
<div class="c m" style="left:219px;top:446px;width:170px;height:21px"></div>
<div class="c m" style="left:389px;top:446px;width:191px;height:21px"><i>Date Totals</i></div>
<div class="c t" style="left:580px;top:446px;width:83px;height:21px"></div>
<div class="c t" style="left:663px;top:446px;width:236px;height:21px"></div>
<div class="c t n" style="left:899px;top:446px;width:62px;height:21px"><i>17</i></div>
<div class="c t n" style="left:961px;top:446px;width:44px;height:21px"></div>
<div class="c t n" style="left:1005px;top:446px;width:63px;height:21px"></div>
<div class="c t n" style="left:1068px;top:446px;width:78px;height:21px"><i>3,400.00</i></div>
<div class="c t n" style="left:1146px;top:446px;width:95px;height:21px"></div>
<div class="c t n" style="left:1241px;top:446px;width:70px;height:21px"></div>
<div class="c t n" style="left:1311px;top:446px;width:68px;height:21px"><i>115.00</i></div>
<div class="c t n" style="left:1379px;top:446px;width:95px;height:21px"><i>55.00</i></div>
<div class="c t n" style="left:1474px;top:446px;width:84px;height:21px"><i>3,570.00</i></div>
<div class="c m" style="left:1558px;top:446px;width:107px;height:21px"></div>
<div class="c t" style="left:1665px;top:446px;width:95px;height:21px"></div>
<div class="c m" style="left:38px;top:467px;width:80px;height:63px"><i>07/04/2025</i></div>
<div class="c m" style="left:118px;top:467px;width:101px;height:21px"><i>R-1</i></div>
<div class="c m" style="left:118px;top:488px;width:101px;height:42px"><i>R-2</i></div>
<div class="c m p" style="left:219px;top:467px;width:170px;height:63px"><i>CUSTOMER</i></div>
<div class="c m" style="left:389px;top:467px;width:191px;height:42px"><i>101 DEL BL NB</i></div>
<div class="c m" style="left:389px;top:509px;width:191px;height:21px"><i>101 DEL BLK BL</i></div>
<div class="c m" style="left:1558px;top:467px;width:107px;height:42px"><i>MAIN</i></div>
<div class="c m" style="left:1558px;top:509px;width:107px;height:21px"><i>(NIL)</i></div>
<div class="c rh" style="left:0px;top:467px;width:38px;height:21px"><i>1</i></div>
<div class="c d" style="left:580px;top:467px;width:83px;height:21px"><i>4 XL</i></div>
<div class="c d" style="left:663px;top:467px;width:236px;height:21px"><i>LT001</i></div>
<div class="c d n neg" style="left:899px;top:467px;width:62px;height:21px"><i>-1</i></div>
<div class="c d n" style="left:961px;top:467px;width:44px;height:21px"></div>
<div class="c d n" style="left:1005px;top:467px;width:63px;height:21px"><i>200.0000</i></div>
<div class="c d n neg" style="left:1068px;top:467px;width:78px;height:21px"><i>-200.00</i></div>
<div class="c d n" style="left:1146px;top:467px;width:95px;height:21px"></div>
<div class="c d n" style="left:1241px;top:467px;width:70px;height:21px"></div>
<div class="c d n" style="left:1311px;top:467px;width:68px;height:21px"><i>4.76</i></div>
<div class="c d n" style="left:1379px;top:467px;width:95px;height:21px"><i>4.76</i></div>
<div class="c d n neg" style="left:1474px;top:467px;width:84px;height:21px"><i>-200.00</i></div>
<div class="c d" style="left:1665px;top:467px;width:95px;height:21px"><i>07/04/25</i></div>
<div class="c rh" style="left:0px;top:488px;width:38px;height:21px"><i>2</i></div>
<div class="c d" style="left:580px;top:488px;width:83px;height:21px"><i>4 XL</i></div>
<div class="c d" style="left:663px;top:488px;width:236px;height:21px"><i>IT02654</i></div>
<div class="c d n" style="left:899px;top:488px;width:62px;height:21px"><i>10</i></div>
<div class="c d n" style="left:961px;top:488px;width:44px;height:21px"></div>
<div class="c d n" style="left:1005px;top:488px;width:63px;height:21px"><i>300.0000</i></div>
<div class="c d n" style="left:1068px;top:488px;width:78px;height:21px"><i>3,000.00</i></div>
<div class="c d n" style="left:1146px;top:488px;width:95px;height:21px"></div>
<div class="c d n" style="left:1241px;top:488px;width:70px;height:21px"></div>
<div class="c d n" style="left:1311px;top:488px;width:68px;height:21px"><i>71.43</i></div>
<div class="c d n" style="left:1379px;top:488px;width:95px;height:21px"><i>71.43</i></div>
<div class="c d n" style="left:1474px;top:488px;width:84px;height:21px"><i>2,999.83</i></div>
<div class="c d" style="left:1665px;top:488px;width:95px;height:21px"><i>07/04/25</i></div>
<div class="c rh" style="left:0px;top:509px;width:38px;height:21px"><i>3</i></div>
<div class="c d" style="left:580px;top:509px;width:83px;height:21px"><i>4 XL</i></div>
<div class="c d" style="left:663px;top:509px;width:236px;height:21px"><i>0</i></div>
<div class="c d n neg" style="left:899px;top:509px;width:62px;height:21px"><i>-1</i></div>
<div class="c d n" style="left:961px;top:509px;width:44px;height:21px"></div>
<div class="c d n up" style="left:1005px;top:509px;width:63px;height:21px"><i>2,350.824</i></div>
<div class="c d n neg" style="left:1068px;top:509px;width:78px;height:21px"><i>-2,350.82</i></div>
<div class="c d n" style="left:1146px;top:509px;width:95px;height:21px"></div>
<div class="c d n" style="left:1241px;top:509px;width:70px;height:21px"></div>
<div class="c d n" style="left:1311px;top:509px;width:68px;height:21px"><i>125.94</i></div>
<div class="c d n" style="left:1379px;top:509px;width:95px;height:21px"><i>125.94</i></div>
<div class="c d n neg" style="left:1474px;top:509px;width:84px;height:21px"><i>-2,350.83</i></div>
<div class="c d" style="left:1665px;top:509px;width:95px;height:21px"><i>07/04/25</i></div>
<div class="c rh tb" style="left:0px;top:530px;width:38px;height:21px"></div>
<div class="c m" style="left:38px;top:530px;width:80px;height:21px"></div>
<div class="c m" style="left:118px;top:530px;width:101px;height:21px"></div>
<div class="c m" style="left:219px;top:530px;width:170px;height:21px"></div>
<div class="c m" style="left:389px;top:530px;width:191px;height:21px"><i>Date Totals</i></div>
<div class="c t" style="left:580px;top:530px;width:83px;height:21px"></div>
<div class="c t" style="left:663px;top:530px;width:236px;height:21px"></div>
<div class="c t n" style="left:899px;top:530px;width:62px;height:21px"><i>8</i></div>
<div class="c t n" style="left:961px;top:530px;width:44px;height:21px"></div>
<div class="c t n" style="left:1005px;top:530px;width:63px;height:21px"></div>
<div class="c t n" style="left:1068px;top:530px;width:78px;height:21px"><i>449.18</i></div>
<div class="c t n" style="left:1146px;top:530px;width:95px;height:21px"></div>
<div class="c t n" style="left:1241px;top:530px;width:70px;height:21px"></div>
<div class="c t n tneg" style="left:1311px;top:530px;width:68px;height:21px"><i>-59.27</i></div>
<div class="c t n tneg" style="left:1379px;top:530px;width:95px;height:21px"><i>-59.27</i></div>
<div class="c t n" style="left:1474px;top:530px;width:84px;height:21px"><i>449.00</i></div>
<div class="c m" style="left:1558px;top:530px;width:107px;height:21px"></div>
<div class="c t" style="left:1665px;top:530px;width:95px;height:21px"></div>
<div class="c m" style="left:38px;top:551px;width:80px;height:147px"><i>08/04/2025</i></div>
<div class="c m" style="left:118px;top:551px;width:101px;height:21px"><i>SR-1</i></div>
<div class="c m" style="left:118px;top:572px;width:101px;height:126px"><i>STO-1</i></div>
<div class="c m p" style="left:219px;top:551px;width:170px;height:147px"><i><span class="bb">BRAND BAZAR</span>-<br>Agra</i></div>
<div class="c m" style="left:389px;top:551px;width:191px;height:147px"><i>101 DEL BL NB</i></div>
<div class="c m" style="left:1558px;top:551px;width:107px;height:147px"><i>MAIN</i></div>
<div class="c rh" style="left:0px;top:551px;width:38px;height:21px"><i>1</i></div>
<div class="c d" style="left:580px;top:551px;width:83px;height:21px"><i>4 XL</i></div>
<div class="c d" style="left:663px;top:551px;width:236px;height:21px"><i>LT001</i></div>
<div class="c d n neg" style="left:899px;top:551px;width:62px;height:21px"><i>-1</i></div>
<div class="c d n" style="left:961px;top:551px;width:44px;height:21px"></div>
<div class="c d n" style="left:1005px;top:551px;width:63px;height:21px"><i>200.0000</i></div>
<div class="c d n neg" style="left:1068px;top:551px;width:78px;height:21px"><i>-200.00</i></div>
<div class="c d n" style="left:1146px;top:551px;width:95px;height:21px"></div>
<div class="c d n" style="left:1241px;top:551px;width:70px;height:21px"></div>
<div class="c d n" style="left:1311px;top:551px;width:68px;height:21px"><i>5.00</i></div>
<div class="c d n" style="left:1379px;top:551px;width:95px;height:21px"><i>5.00</i></div>
<div class="c d n neg" style="left:1474px;top:551px;width:84px;height:21px"><i>-210.00</i></div>
<div class="c d" style="left:1665px;top:551px;width:95px;height:21px"><i>08/04/25</i></div>
<div class="c rh" style="left:0px;top:572px;width:38px;height:21px"><i>2</i></div>
<div class="c d" style="left:580px;top:572px;width:83px;height:21px"><i>4 XL</i></div>
<div class="c d" style="left:663px;top:572px;width:236px;height:21px"><i>LT001</i></div>
<div class="c d n" style="left:899px;top:572px;width:62px;height:21px"><i>1</i></div>
<div class="c d n" style="left:961px;top:572px;width:44px;height:21px"></div>
<div class="c d n" style="left:1005px;top:572px;width:63px;height:21px"><i>200.0000</i></div>
<div class="c d n" style="left:1068px;top:572px;width:78px;height:21px"><i>200.00</i></div>
<div class="c d n neg" style="left:1146px;top:572px;width:95px;height:21px"><i>-9.00</i></div>
<div class="c d n neg" style="left:1241px;top:572px;width:70px;height:21px"><i>-20.00</i></div>
<div class="c d n" style="left:1311px;top:572px;width:68px;height:21px"><i>4.28</i></div>
<div class="c d n" style="left:1379px;top:572px;width:95px;height:21px"><i>4.28</i></div>
<div class="c d n" style="left:1474px;top:572px;width:84px;height:21px"><i>179.20</i></div>
<div class="c d" style="left:1665px;top:572px;width:95px;height:21px"><i>08/04/25</i></div>
<div class="c rh" style="left:0px;top:593px;width:38px;height:21px"><i>3</i></div>
<div class="c d" style="left:580px;top:593px;width:83px;height:21px"><i>L</i></div>
<div class="c d" style="left:663px;top:593px;width:236px;height:21px"><i>LT001</i></div>
<div class="c d n" style="left:899px;top:593px;width:62px;height:21px"><i>1</i></div>
<div class="c d n" style="left:961px;top:593px;width:44px;height:21px"></div>
<div class="c d n" style="left:1005px;top:593px;width:63px;height:21px"><i>200.0000</i></div>
<div class="c d n" style="left:1068px;top:593px;width:78px;height:21px"><i>200.00</i></div>
<div class="c d n neg" style="left:1146px;top:593px;width:95px;height:21px"><i>-9.00</i></div>
<div class="c d n neg" style="left:1241px;top:593px;width:70px;height:21px"><i>-20.00</i></div>
<div class="c d n" style="left:1311px;top:593px;width:68px;height:21px"><i>4.28</i></div>
<div class="c d n" style="left:1379px;top:593px;width:95px;height:21px"><i>4.28</i></div>
<div class="c d n" style="left:1474px;top:593px;width:84px;height:21px"><i>179.56</i></div>
<div class="c d" style="left:1665px;top:593px;width:95px;height:21px"><i>08/04/25</i></div>
<div class="c rh" style="left:0px;top:614px;width:38px;height:21px"><i>4</i></div>
<div class="c d" style="left:580px;top:614px;width:83px;height:21px"><i>M</i></div>
<div class="c d" style="left:663px;top:614px;width:236px;height:21px"><i>LT001</i></div>
<div class="c d n" style="left:899px;top:614px;width:62px;height:21px"><i>1</i></div>
<div class="c d n" style="left:961px;top:614px;width:44px;height:21px"></div>
<div class="c d n" style="left:1005px;top:614px;width:63px;height:21px"><i>200.0000</i></div>
<div class="c d n" style="left:1068px;top:614px;width:78px;height:21px"><i>200.00</i></div>
<div class="c d n neg" style="left:1146px;top:614px;width:95px;height:21px"><i>-9.00</i></div>
<div class="c d n neg" style="left:1241px;top:614px;width:70px;height:21px"><i>-20.00</i></div>
<div class="c d n" style="left:1311px;top:614px;width:68px;height:21px"><i>4.28</i></div>
<div class="c d n" style="left:1379px;top:614px;width:95px;height:21px"><i>4.28</i></div>
<div class="c d n" style="left:1474px;top:614px;width:84px;height:21px"><i>179.56</i></div>
<div class="c d" style="left:1665px;top:614px;width:95px;height:21px"><i>08/04/25</i></div>
<div class="c rh" style="left:0px;top:635px;width:38px;height:21px"><i>5</i></div>
<div class="c d" style="left:580px;top:635px;width:83px;height:21px"><i>S</i></div>
<div class="c d" style="left:663px;top:635px;width:236px;height:21px"><i>LT001</i></div>
<div class="c d n" style="left:899px;top:635px;width:62px;height:21px"><i>1</i></div>
<div class="c d n" style="left:961px;top:635px;width:44px;height:21px"></div>
<div class="c d n" style="left:1005px;top:635px;width:63px;height:21px"><i>200.0000</i></div>
<div class="c d n" style="left:1068px;top:635px;width:78px;height:21px"><i>200.00</i></div>
<div class="c d n neg" style="left:1146px;top:635px;width:95px;height:21px"><i>-9.00</i></div>
<div class="c d n neg" style="left:1241px;top:635px;width:70px;height:21px"><i>-20.00</i></div>
<div class="c d n" style="left:1311px;top:635px;width:68px;height:21px"><i>4.28</i></div>
<div class="c d n" style="left:1379px;top:635px;width:95px;height:21px"><i>4.28</i></div>
<div class="c d n" style="left:1474px;top:635px;width:84px;height:21px"><i>179.56</i></div>
<div class="c d" style="left:1665px;top:635px;width:95px;height:21px"><i>08/04/25</i></div>
<div class="c rh" style="left:0px;top:656px;width:38px;height:21px"><i>6</i></div>
<div class="c d" style="left:580px;top:656px;width:83px;height:21px"><i>XL</i></div>
<div class="c d" style="left:663px;top:656px;width:236px;height:21px"><i>LT001</i></div>
<div class="c d n" style="left:899px;top:656px;width:62px;height:21px"><i>1</i></div>
<div class="c d n" style="left:961px;top:656px;width:44px;height:21px"></div>
<div class="c d n" style="left:1005px;top:656px;width:63px;height:21px"><i>200.0000</i></div>
<div class="c d n" style="left:1068px;top:656px;width:78px;height:21px"><i>200.00</i></div>
<div class="c d n neg" style="left:1146px;top:656px;width:95px;height:21px"><i>-9.00</i></div>
<div class="c d n neg" style="left:1241px;top:656px;width:70px;height:21px"><i>-20.00</i></div>
<div class="c d n" style="left:1311px;top:656px;width:68px;height:21px"><i>4.28</i></div>
<div class="c d n" style="left:1379px;top:656px;width:95px;height:21px"><i>4.28</i></div>
<div class="c d n" style="left:1474px;top:656px;width:84px;height:21px"><i>179.56</i></div>
<div class="c d" style="left:1665px;top:656px;width:95px;height:21px"><i>08/04/25</i></div>
<div class="c rh" style="left:0px;top:677px;width:38px;height:21px"><i>7</i></div>
<div class="c d" style="left:580px;top:677px;width:83px;height:21px"><i>XS</i></div>
<div class="c d" style="left:663px;top:677px;width:236px;height:21px"><i>LT001</i></div>
<div class="c d n" style="left:899px;top:677px;width:62px;height:21px"><i>1</i></div>
<div class="c d n" style="left:961px;top:677px;width:44px;height:21px"></div>
<div class="c d n" style="left:1005px;top:677px;width:63px;height:21px"><i>200.0000</i></div>
<div class="c d n" style="left:1068px;top:677px;width:78px;height:21px"><i>200.00</i></div>
<div class="c d n neg" style="left:1146px;top:677px;width:95px;height:21px"><i>-9.00</i></div>
<div class="c d n neg" style="left:1241px;top:677px;width:70px;height:21px"><i>-20.00</i></div>
<div class="c d n" style="left:1311px;top:677px;width:68px;height:21px"><i>4.28</i></div>
<div class="c d n" style="left:1379px;top:677px;width:95px;height:21px"><i>4.28</i></div>
<div class="c d n" style="left:1474px;top:677px;width:84px;height:21px"><i>179.56</i></div>
<div class="c d" style="left:1665px;top:677px;width:95px;height:21px"><i>08/04/25</i></div>
<div class="c rh tb" style="left:0px;top:698px;width:38px;height:21px"></div>
<div class="c m" style="left:38px;top:698px;width:80px;height:21px"></div>
<div class="c m" style="left:118px;top:698px;width:101px;height:21px"></div>
<div class="c m" style="left:219px;top:698px;width:170px;height:21px"></div>
<div class="c m" style="left:389px;top:698px;width:191px;height:21px"><i>Date Totals</i></div>
<div class="c t" style="left:580px;top:698px;width:83px;height:21px"></div>
<div class="c t" style="left:663px;top:698px;width:236px;height:21px"></div>
<div class="c t n" style="left:899px;top:698px;width:62px;height:21px"><i>5</i></div>
<div class="c t n" style="left:961px;top:698px;width:44px;height:21px"></div>
<div class="c t n" style="left:1005px;top:698px;width:63px;height:21px"></div>
<div class="c t n" style="left:1068px;top:698px;width:78px;height:21px"><i>1,000.00</i></div>
<div class="c t n tneg" style="left:1146px;top:698px;width:95px;height:21px"><i>-54.00</i></div>
<div class="c t n tneg" style="left:1241px;top:698px;width:70px;height:21px"><i>-120.00</i></div>
<div class="c t n" style="left:1311px;top:698px;width:68px;height:21px"><i>20.68</i></div>
<div class="c t n" style="left:1379px;top:698px;width:95px;height:21px"><i>20.68</i></div>
<div class="c t n" style="left:1474px;top:698px;width:84px;height:21px"><i>867.00</i></div>
<div class="c m" style="left:1558px;top:698px;width:107px;height:21px"></div>
<div class="c t" style="left:1665px;top:698px;width:95px;height:21px"></div>
<div class="c m" style="left:38px;top:719px;width:80px;height:84px"><i>09/04/2025</i></div>
<div class="c m" style="left:118px;top:719px;width:101px;height:21px"><i>GST-4</i></div>
<div class="c m" style="left:118px;top:740px;width:101px;height:21px"><i>GST-5</i></div>
<div class="c m" style="left:118px;top:761px;width:101px;height:21px"><i>GST-6</i></div>
<div class="c m" style="left:118px;top:782px;width:101px;height:21px"><i>GST-7</i></div>
<div class="c m p" style="left:219px;top:719px;width:170px;height:84px"><i><span class="bb">BRAND BAZAR</span>-<br>Agra</i></div>
<div class="c m" style="left:389px;top:719px;width:191px;height:63px"><i>101 DEL BL NB</i></div>
<div class="c m" style="left:389px;top:782px;width:191px;height:21px"><i>101 DEL MA BL</i></div>
<div class="c m" style="left:1558px;top:719px;width:107px;height:63px"><i>MAIN</i></div>
<div class="c m" style="left:1558px;top:782px;width:107px;height:21px"><i>(NIL)</i></div>
<div class="c rh" style="left:0px;top:719px;width:38px;height:21px"><i>1</i></div>
<div class="c d" style="left:580px;top:719px;width:83px;height:21px"><i>4 XL</i></div>
<div class="c d" style="left:663px;top:719px;width:236px;height:21px"><i>100</i></div>
<div class="c d n" style="left:899px;top:719px;width:62px;height:21px"><i>15</i></div>
<div class="c d n" style="left:961px;top:719px;width:44px;height:21px"></div>
<div class="c d n" style="left:1005px;top:719px;width:63px;height:21px"><i>200.0000</i></div>
<div class="c d n" style="left:1068px;top:719px;width:78px;height:21px"><i>3,000.00</i></div>
<div class="c d n" style="left:1146px;top:719px;width:95px;height:21px"></div>
<div class="c d n" style="left:1241px;top:719px;width:70px;height:21px"></div>
<div class="c d n" style="left:1311px;top:719px;width:68px;height:21px"><i>75.00</i></div>
<div class="c d n" style="left:1379px;top:719px;width:95px;height:21px"><i>75.00</i></div>
<div class="c d n" style="left:1474px;top:719px;width:84px;height:21px"><i>3,150.00</i></div>
<div class="c d" style="left:1665px;top:719px;width:95px;height:21px"><i>09/04/25</i></div>
<div class="c rh" style="left:0px;top:740px;width:38px;height:21px"><i>2</i></div>
<div class="c d" style="left:580px;top:740px;width:83px;height:21px"><i>4 XL</i></div>
<div class="c d" style="left:663px;top:740px;width:236px;height:21px"><i>IT02654</i></div>
<div class="c d n" style="left:899px;top:740px;width:62px;height:21px"><i>150</i></div>
<div class="c d n" style="left:961px;top:740px;width:44px;height:21px"></div>
<div class="c d n" style="left:1005px;top:740px;width:63px;height:21px"><i>200.0000</i></div>
<div class="c d n" style="left:1068px;top:740px;width:78px;height:21px"><i>30,000.00</i></div>
<div class="c d n" style="left:1146px;top:740px;width:95px;height:21px"></div>
<div class="c d n" style="left:1241px;top:740px;width:70px;height:21px"></div>
<div class="c d n" style="left:1311px;top:740px;width:68px;height:21px"><i>750.00</i></div>
<div class="c d n" style="left:1379px;top:740px;width:95px;height:21px"><i>750.00</i></div>
<div class="c d n" style="left:1474px;top:740px;width:84px;height:21px"><i>31,500.00</i></div>
<div class="c d" style="left:1665px;top:740px;width:95px;height:21px"><i>09/04/25</i></div>
<div class="c rh" style="left:0px;top:761px;width:38px;height:21px"><i>3</i></div>
<div class="c d" style="left:580px;top:761px;width:83px;height:21px"><i>4 XL</i></div>
<div class="c d" style="left:663px;top:761px;width:236px;height:21px"><i>DSGFH</i></div>
<div class="c d n" style="left:899px;top:761px;width:62px;height:21px"><i>110</i></div>
<div class="c d n" style="left:961px;top:761px;width:44px;height:21px"></div>
<div class="c d n" style="left:1005px;top:761px;width:63px;height:21px"><i>200.0000</i></div>
<div class="c d n" style="left:1068px;top:761px;width:78px;height:21px"><i>22,000.00</i></div>
<div class="c d n" style="left:1146px;top:761px;width:95px;height:21px"></div>
<div class="c d n" style="left:1241px;top:761px;width:70px;height:21px"></div>
<div class="c d n" style="left:1311px;top:761px;width:68px;height:21px"><i>550.00</i></div>
<div class="c d n" style="left:1379px;top:761px;width:95px;height:21px"><i>550.00</i></div>
<div class="c d n" style="left:1474px;top:761px;width:84px;height:21px"><i>23,100.00</i></div>
<div class="c d" style="left:1665px;top:761px;width:95px;height:21px"><i>09/04/25</i></div>
<div class="c rh" style="left:0px;top:782px;width:38px;height:21px"><i>4</i></div>
<div class="c d" style="left:580px;top:782px;width:83px;height:21px"><i>4 XL</i></div>
<div class="c d" style="left:663px;top:782px;width:236px;height:21px"><i>5214</i></div>
<div class="c d n" style="left:899px;top:782px;width:62px;height:21px"><i>100</i></div>
<div class="c d n" style="left:961px;top:782px;width:44px;height:21px"></div>
<div class="c d n up" style="left:1005px;top:782px;width:63px;height:21px"><i>2,222.000</i></div>
<div class="c d n" style="left:1068px;top:782px;width:78px;height:21px"><i>2,22,200.00</i></div>
<div class="c d n" style="left:1146px;top:782px;width:95px;height:21px"></div>
<div class="c d n" style="left:1241px;top:782px;width:70px;height:21px"></div>
<div class="c d n" style="left:1311px;top:782px;width:68px;height:21px"><i>13,332.00</i></div>
<div class="c d n" style="left:1379px;top:782px;width:95px;height:21px"><i>13,332.00</i></div>
<div class="c d n" style="left:1474px;top:782px;width:84px;height:21px"><i>2,48,864.00</i></div>
<div class="c d" style="left:1665px;top:782px;width:95px;height:21px"><i>09/04/25</i></div>
<div class="c rh tb" style="left:0px;top:803px;width:38px;height:21px"></div>
<div class="c m" style="left:38px;top:803px;width:80px;height:21px"></div>
<div class="c m" style="left:118px;top:803px;width:101px;height:21px"></div>
<div class="c m" style="left:219px;top:803px;width:170px;height:21px"></div>
<div class="c m" style="left:389px;top:803px;width:191px;height:21px"><i>Date Totals</i></div>
<div class="c t" style="left:580px;top:803px;width:83px;height:21px"></div>
<div class="c t" style="left:663px;top:803px;width:236px;height:21px"></div>
<div class="c t n" style="left:899px;top:803px;width:62px;height:21px"><i>375</i></div>
<div class="c t n" style="left:961px;top:803px;width:44px;height:21px"></div>
<div class="c t n" style="left:1005px;top:803px;width:63px;height:21px"></div>
<div class="c t n" style="left:1068px;top:803px;width:78px;height:21px"><i>2,77,200.00</i></div>
<div class="c t n" style="left:1146px;top:803px;width:95px;height:21px"></div>
<div class="c t n" style="left:1241px;top:803px;width:70px;height:21px"></div>
<div class="c t n" style="left:1311px;top:803px;width:68px;height:21px"><i>14,707.00</i></div>
<div class="c t n" style="left:1379px;top:803px;width:95px;height:21px"><i>14,707.00</i></div>
<div class="c t n" style="left:1474px;top:803px;width:84px;height:21px"><i>3,06,614.00</i></div>
<div class="c m" style="left:1558px;top:803px;width:107px;height:21px"></div>
<div class="c t" style="left:1665px;top:803px;width:95px;height:21px"></div>
<div class="c m" style="left:38px;top:824px;width:80px;height:21px"><i>14/04/2025</i></div>
<div class="c m" style="left:118px;top:824px;width:101px;height:21px"><i>GST-8</i></div>
<div class="c m p" style="left:219px;top:824px;width:170px;height:21px"><i><span class="bb">BRAND BAZAR</span>-</i></div>
<div class="c m" style="left:389px;top:824px;width:191px;height:21px"><i>LOOSE FIT HOODIE GR</i></div>
<div class="c m" style="left:1558px;top:824px;width:107px;height:21px"><i>MAIN</i></div>
<div class="c rh" style="left:0px;top:824px;width:38px;height:21px"><i>1</i></div>
<div class="c d" style="left:580px;top:824px;width:83px;height:21px"><i>L</i></div>
<div class="c d" style="left:663px;top:824px;width:236px;height:21px"><i>LS0021</i></div>
<div class="c d n" style="left:899px;top:824px;width:62px;height:21px"><i>90</i></div>
<div class="c d n" style="left:961px;top:824px;width:44px;height:21px"></div>
<div class="c d n" style="left:1005px;top:824px;width:63px;height:21px"><i>999.0000</i></div>
<div class="c d n" style="left:1068px;top:824px;width:78px;height:21px"><i>89,910.00</i></div>
<div class="c d n" style="left:1146px;top:824px;width:95px;height:21px"></div>
<div class="c d n" style="left:1241px;top:824px;width:70px;height:21px"></div>
<div class="c d n" style="left:1311px;top:824px;width:68px;height:21px"><i>2,247.75</i></div>
<div class="c d n" style="left:1379px;top:824px;width:95px;height:21px"><i>2,247.75</i></div>
<div class="c d n" style="left:1474px;top:824px;width:84px;height:21px"><i>94,405.50</i></div>
<div class="c d" style="left:1665px;top:824px;width:95px;height:21px"><i>14/04/25</i></div>
<div class="abs" style="left:1759px;top:0;width:1px;height:841px;background:#a0a0a0"></div><div class="abs" style="left:1760px;top:0;width:1px;height:841px;background:#696969"></div>
<div id="sbar" class="abs"></div>
<div id="thumb" class="abs"></div>
</div>
<div id="red" class="abs"></div>
<div class="btn" style="left:31px;width:104px"><span class="ms">Print Report</span></div>
<div class="btn" style="left:135px;width:161px"><span class="ms">Print With Header/Footer</span></div>
<div class="btn" style="left:296px;width:71px"><span class="ms">Close</span></div>
<div id="keys" class="abs"><span class="ms">F11=Print Report  F12=Print with Head/Foot  CTRL+C=Copy  Alt+C=Close</span></div>
<div id="psz" class="abs"><span class="ms">Page Size</span></div>
<div id="pin" class="abs"><span class="ms">50</span></div>
<div class="abs vd" style="left:170px;top:966px">Page</div>
<div class="abs nv" style="left:218px;letter-spacing:-2.2px">|&lt;</div>
<div class="abs nv" style="left:242.5px">&lt;</div>
<div id="nud" class="abs"><div class="abs vd" style="left:2px;top:1px">1</div>
<svg class="abs" style="left:55px;top:1px" width="15" height="18" viewBox="0 0 15 18"><rect x="0" y="0" width="15" height="18" fill="#f0f0f0"/><rect x="0.5" y="0.5" width="14" height="8.5" fill="#f0f0f0" stroke="#adadad"/><rect x="0.5" y="10" width="14" height="8" fill="#f0f0f0" stroke="#adadad"/><path d="M4.5 6.5l3-3 3 3z M4.5 12.5l3 3 3-3z" fill="#000"/></svg>
</div>
<div class="abs nv" style="left:337px">&gt;</div>
<div class="abs nv" style="left:360px;letter-spacing:-2.2px">&gt;|</div>
<div class="abs vd" style="left:385px;top:967px">Of 6</div>
<div class="st" style="left:1731px;width:60px"><span class="ms">Average: 1</span></div>
<div class="st" style="left:1792px;width:48px"><span class="ms">Count: 1</span></div>
<div class="st" style="left:1841px;width:48px"><span class="ms">Sum:1</span></div>
<div class="abs vd" style="left:1681px;top:992px">Report Created [Duration : 1s ]</div>
</body></html>
